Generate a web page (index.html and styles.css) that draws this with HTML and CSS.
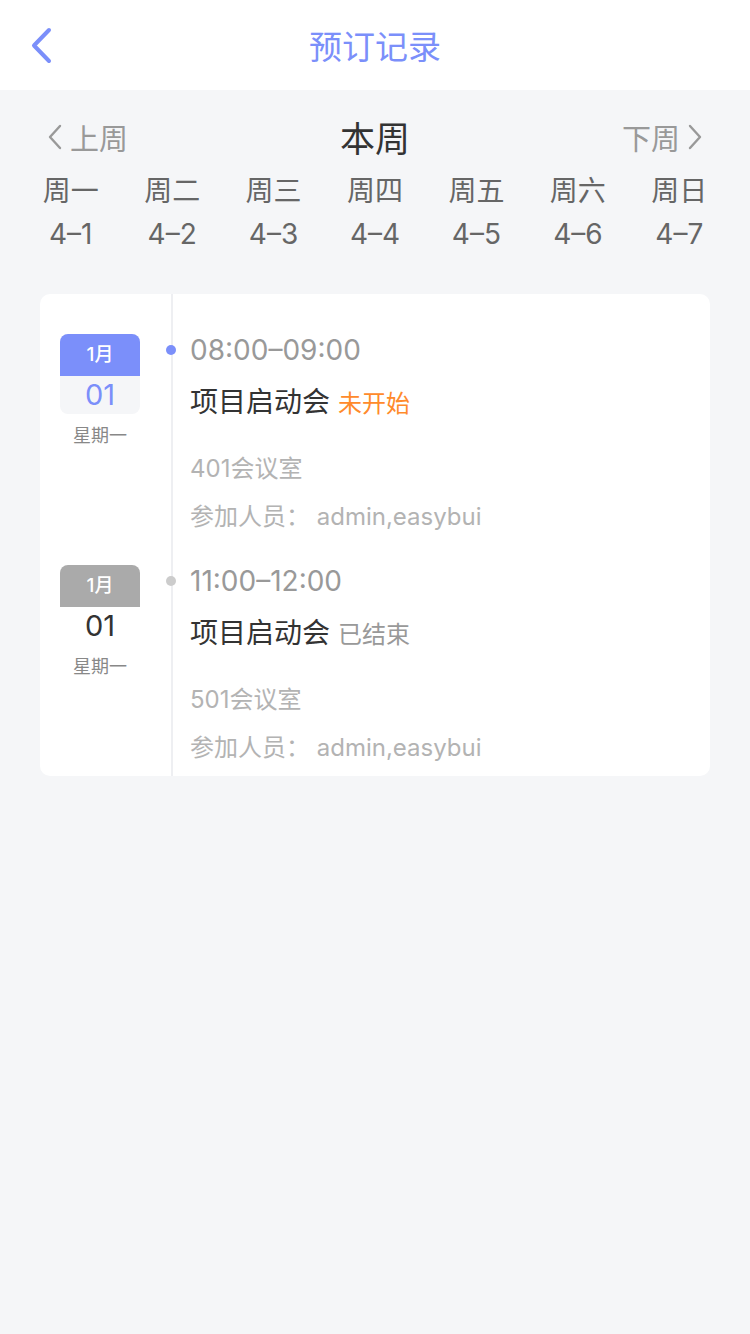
FILE: index.html
```html
<!DOCTYPE html>
<html lang="zh-CN">
<head>
<meta charset="UTF-8">
<meta name="viewport" content="width=device-width, initial-scale=1.0">
<title>预订记录</title>
<link rel="stylesheet" href="styles.css">
</head>
<body>

<div class="header">
  <a class="back" href="#">
    <svg width="24" height="38" viewBox="0 0 24 38"><polyline points="18,3 3,18.5 18,34" fill="none" stroke="#7b8ffa" stroke-width="4" stroke-linecap="round" stroke-linejoin="round"/></svg>
  </a>
  <h1>预订记录</h1>
</div>

<div class="week">
  <div class="week-nav">
    <a class="prev" href="#">
      <svg width="16" height="26" viewBox="0 0 16 26"><polyline points="13,2 3,13 13,24" fill="none" stroke="#999" stroke-width="2.4" stroke-linecap="round" stroke-linejoin="round"/></svg>
      上周
    </a>
    <div class="current">本周</div>
    <a class="next" href="#">
      下周
      <svg width="16" height="26" viewBox="0 0 16 26"><polyline points="3,2 13,13 3,24" fill="none" stroke="#999" stroke-width="2.4" stroke-linecap="round" stroke-linejoin="round"/></svg>
    </a>
  </div>
  <div class="week-days">
    <div class="day"><span>周一</span><span>4–1</span></div>
    <div class="day"><span>周二</span><span>4–2</span></div>
    <div class="day"><span>周三</span><span>4–3</span></div>
    <div class="day"><span>周四</span><span>4–4</span></div>
    <div class="day"><span>周五</span><span>4–5</span></div>
    <div class="day"><span>周六</span><span>4–6</span></div>
    <div class="day"><span>周日</span><span>4–7</span></div>
  </div>
</div>

<div class="card">
  <div class="record">
    <div class="record-date">
      <div class="badge">
        <div class="badge-month">1月</div>
        <div class="badge-day">01</div>
      </div>
      <div class="weekday">星期一</div>
    </div>
    <div class="record-body">
      <div class="time"><i class="dot"></i>08:00–09:00</div>
      <div class="title">项目启动会 <span class="status">未开始</span></div>
      <div class="room">401会议室</div>
      <div class="people">参加人员： admin,easybui</div>
    </div>
  </div>

  <div class="record done">
    <div class="record-date">
      <div class="badge">
        <div class="badge-month">1月</div>
        <div class="badge-day">01</div>
      </div>
      <div class="weekday">星期一</div>
    </div>
    <div class="record-body">
      <div class="time"><i class="dot"></i>11:00–12:00</div>
      <div class="title">项目启动会 <span class="status">已结束</span></div>
      <div class="room">501会议室</div>
      <div class="people">参加人员： admin,easybui</div>
    </div>
  </div>
</div>

</body>
</html>
```

FILE: styles.css
```css
body {
  font-family: Inter, "Noto Sans CJK SC", sans-serif;
  background-color: #f5f6f8;
  color: #333333;
  margin: 0;
  padding: 0;
  min-height: 1334px;
}

a {
  text-decoration: none;
}

.header {
  height: 90px;
  background-color: #ffffff;
  display: flex;
  align-items: center;
  justify-content: center;
  position: relative;
}

.header h1 {
  margin: 0;
  font-size: 33px;
  font-weight: normal;
  color: #7b8ffa;
}

.header .back {
  position: absolute;
  left: 31px;
  top: 27px;
  display: flex;
}

.week {
  padding: 21px 20px 0;
}

.week-nav {
  display: grid;
  grid-template-columns: 1fr auto 1fr;
  align-items: center;
  height: 48px;
  padding: 0 27px;
}

.week-nav a {
  display: flex;
  align-items: center;
  gap: 7px;
  font-size: 29px;
  color: #999999;
}

.week-nav .next {
  justify-self: end;
}

.week-nav .current {
  font-size: 35px;
  color: #333333;
}

.week-days {
  display: grid;
  grid-template-columns: repeat(7, 1fr);
  margin-top: 12px;
}

.day {
  display: flex;
  flex-direction: column;
  align-items: center;
  font-size: 28px;
  color: #666666;
  line-height: 40px;
}

.day span + span {
  margin-top: 3px;
}

.card {
  margin: 40px 40px 0;
  background-color: #ffffff;
  border-radius: 10px;
  overflow: hidden;
}

.record {
  display: flex;
}

.record-date {
  flex: none;
  width: 131px;
  padding-left: 20px;
  box-sizing: border-box;
}

.record-body {
  flex: 1;
  border-left: 2px solid #eeeff2;
  padding: 0 0 30px 17px;
}

.record:first-child .record-date,
.record:first-child .record-body {
  padding-top: 40px;
}

.record:last-child .record-body {
  padding-bottom: 10px;
}

.badge {
  width: 80px;
  border-radius: 8px;
  overflow: hidden;
  background-color: #f5f6f8;
  text-align: center;
}

.badge-month {
  height: 42px;
  line-height: 42px;
  background-color: #7b8ffa;
  color: #ffffff;
  font-size: 19px;
  font-weight: 500;
}

.badge-day {
  height: 38px;
  line-height: 38px;
  font-size: 29px;
  color: #7b8ffa;
}

.weekday {
  width: 80px;
  text-align: center;
  margin-top: 7px;
  font-size: 18px;
  line-height: 30px;
  color: #888888;
}

.done .badge {
  background-color: transparent;
}

.done .badge-month {
  background-color: #aaaaaa;
}

.done .badge-day {
  color: #333333;
}

.time {
  position: relative;
  font-size: 28px;
  line-height: 32px;
  color: #999999;
}

.dot {
  position: absolute;
  left: -24px;
  top: 11px;
  width: 10px;
  height: 10px;
  border-radius: 50%;
  background-color: #7b8ffa;
}

.done .dot {
  background-color: #cccccc;
}

.title {
  margin-top: 16px;
  font-size: 28px;
  line-height: 40px;
  color: #333333;
}

.status {
  font-size: 24px;
  line-height: 1;
  color: #ff8a2b;
}

.done .status {
  color: #999999;
}

.room {
  margin-top: 29px;
  font-size: 24px;
  line-height: 36px;
  color: #b3b3b3;
}

.people {
  margin-top: 12px;
  font-size: 24px;
  line-height: 36px;
  color: #b3b3b3;
}
```
